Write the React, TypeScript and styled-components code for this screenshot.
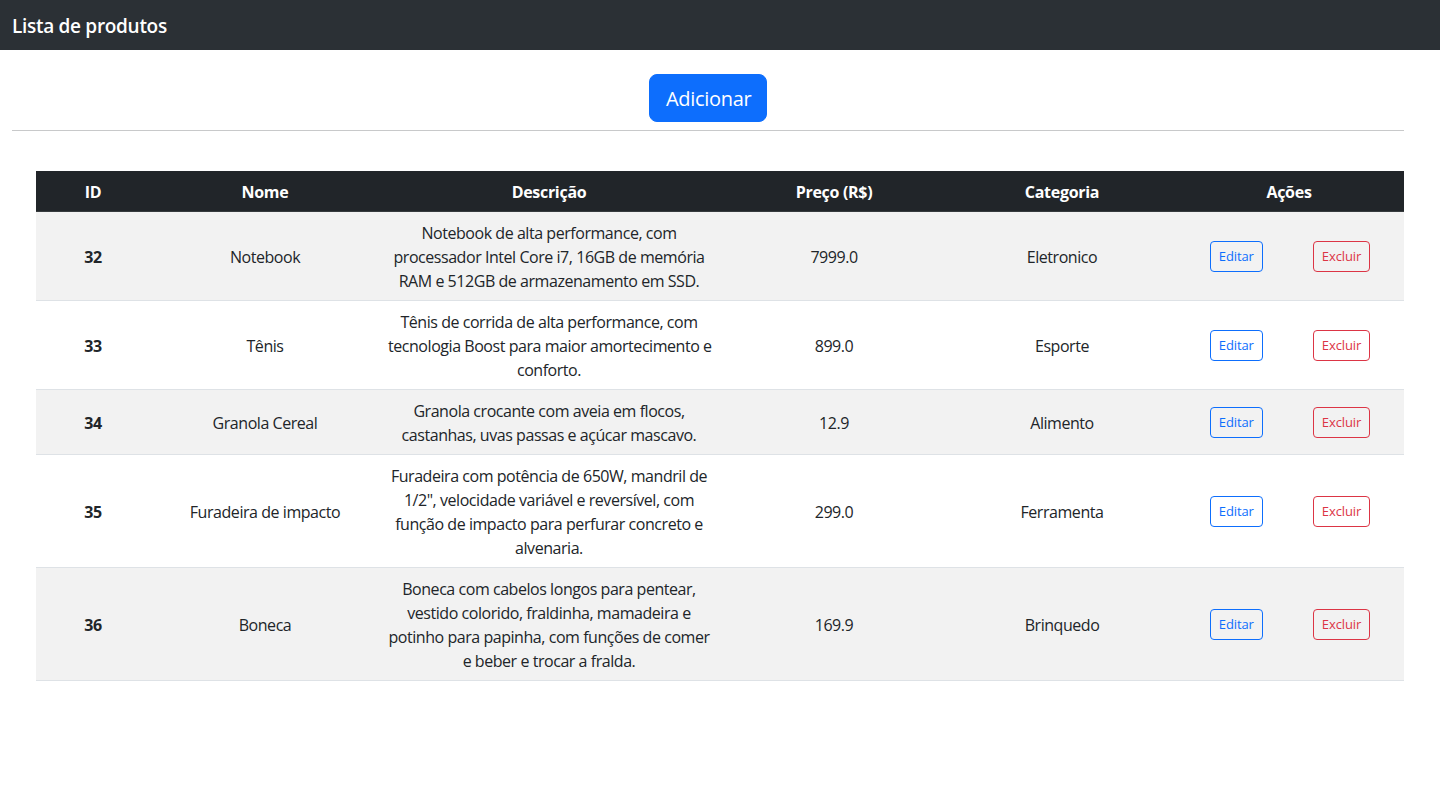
import React from "react";
import styled, { createGlobalStyle } from "styled-components";

const GlobalStyle = createGlobalStyle`
  * { box-sizing: border-box; }
  html, body { margin: 0; padding: 0; background: #fff; }
  body {
    font-family: "Open Sans", "Noto Sans", "Liberation Sans", sans-serif;
    font-size: 16px;
    line-height: 1.5;
    color: #212529;
    letter-spacing: -0.45px;
  }
`;

const NavBar = styled.header`
  height: 50px;
  background: #2b3035;
  display: flex;
  align-items: center;
  padding: 0 12px;
`;

const Brand = styled.h1`
  margin: 0;
  font-size: 19px;
  font-weight: 600;
  color: #fff;
  line-height: 1.2;
  letter-spacing: -0.3px;
  padding-top: 2px;
`;

const Main = styled.main`
  padding: 24px 36px 0 12px;
`;

const Toolbar = styled.div`
  display: flex;
  justify-content: center;
`;

const LargeButton = styled.button`
  font-family: inherit;
  letter-spacing: -0.3px;
  font-size: 20px;
  line-height: 30px;
  padding: 9px 16px 7px;
  border-radius: 8px;
  border: 1px solid #0d6efd;
  background: #0d6efd;
  color: #fff;
  cursor: pointer;
  width: 118px;
`;

const Divider = styled.hr`
  margin: 8px 0 40px;
  border: 0;
  border-top: 1px solid #c8c9ca;
`;

const TableWrap = styled.div`
  padding-left: 24px;
`;

const Table = styled.table`
  width: 100%;
  border-collapse: collapse;
  table-layout: fixed;
`;

const HeadCell = styled.th`
  background: #212529;
  color: #fff;
  font-weight: 700;
  text-align: center;
  padding: 9px 8px 7px;
  line-height: 24px;
  border-bottom: 1px solid #373b3e;
  letter-spacing: -0.3px;
`;

const Row = styled.tr<{ $striped: boolean }>`
  background: ${(p) => (p.$striped ? "#f2f2f2" : "#fff")};
  border-bottom: 1px solid #dee2e6;
`;

const Cell = styled.td<{ $bold?: boolean }>`
  text-align: center;
  vertical-align: middle;
  padding: 9px 8px 7px;
  line-height: 24px;
  font-weight: ${(p) => (p.$bold ? 700 : 400)};
`;

const Actions = styled.div`
  display: flex;
  justify-content: center;
  gap: 50px;
  padding-left: 2px;
  margin-top: -1px;
  margin-bottom: 1px;
`;

const SmallButton = styled.button<{ $tone: "primary" | "danger" }>`
  font-family: inherit;
  letter-spacing: -0.1px;
  font-size: 13px;
  line-height: 21px;
  padding: 4px 8px;
  border-radius: 4px;
  background: transparent;
  cursor: pointer;
  border: 1px solid ${(p) => (p.$tone === "primary" ? "#0d6efd" : "#dc3545")};
  color: ${(p) => (p.$tone === "primary" ? "#0d6efd" : "#dc3545")};
`;

type Product = {
  id: number;
  nome: string;
  descricao: string[];
  preco: string;
  categoria: string;
};

const products: Product[] = [
  {
    id: 32,
    nome: "Notebook",
    descricao: [
      "Notebook de alta performance, com",
      "processador Intel Core i7, 16GB de memória",
      "RAM e 512GB de armazenamento em SSD.",
    ],
    preco: "7999.0",
    categoria: "Eletronico",
  },
  {
    id: 33,
    nome: "Tênis",
    descricao: [
      "Tênis de corrida de alta performance, com",
      "tecnologia Boost para maior amortecimento e",
      "conforto.",
    ],
    preco: "899.0",
    categoria: "Esporte",
  },
  {
    id: 34,
    nome: "Granola Cereal",
    descricao: [
      "Granola crocante com aveia em flocos,",
      "castanhas, uvas passas e açúcar mascavo.",
    ],
    preco: "12.9",
    categoria: "Alimento",
  },
  {
    id: 35,
    nome: "Furadeira de impacto",
    descricao: [
      "Furadeira com potência de 650W, mandril de",
      "1/2\", velocidade variável e reversível, com",
      "função de impacto para perfurar concreto e",
      "alvenaria.",
    ],
    preco: "299.0",
    categoria: "Ferramenta",
  },
  {
    id: 36,
    nome: "Boneca",
    descricao: [
      "Boneca com cabelos longos para pentear,",
      "vestido colorido, fraldinha, mamadeira e",
      "potinho para papinha, com funções de comer",
      "e beber e trocar a fralda.",
    ],
    preco: "169.9",
    categoria: "Brinquedo",
  },
];

const Line = styled.span`
  display: block;
  white-space: nowrap;
`;

const widths = [114, 230, 338, 232, 224, 230];

export default function App() {
  return (
    <>
      <GlobalStyle />
      <NavBar>
        <Brand>Lista de produtos</Brand>
      </NavBar>
      <Main>
        <Toolbar>
          <LargeButton>Adicionar</LargeButton>
        </Toolbar>
        <Divider />
        <TableWrap>
          <Table>
            <colgroup>
              {widths.map((w, i) => (
                <col key={i} style={{ width: w }} />
              ))}
            </colgroup>
            <thead>
              <tr>
                <HeadCell>ID</HeadCell>
                <HeadCell>Nome</HeadCell>
                <HeadCell>Descrição</HeadCell>
                <HeadCell>Preço (R$)</HeadCell>
                <HeadCell>Categoria</HeadCell>
                <HeadCell>Ações</HeadCell>
              </tr>
            </thead>
            <tbody>
              {products.map((p, i) => (
                <Row key={p.id} $striped={i % 2 === 0}>
                  <Cell $bold>{p.id}</Cell>
                  <Cell>{p.nome}</Cell>
                  <Cell>
                    {p.descricao.map((l, j) => (
                      <Line key={j}>{l}</Line>
                    ))}
                  </Cell>
                  <Cell>{p.preco}</Cell>
                  <Cell>{p.categoria}</Cell>
                  <Cell>
                    <Actions>
                      <SmallButton $tone="primary">Editar</SmallButton>
                      <SmallButton $tone="danger">Excluir</SmallButton>
                    </Actions>
                  </Cell>
                </Row>
              ))}
            </tbody>
          </Table>
        </TableWrap>
      </Main>
    </>
  );
}
